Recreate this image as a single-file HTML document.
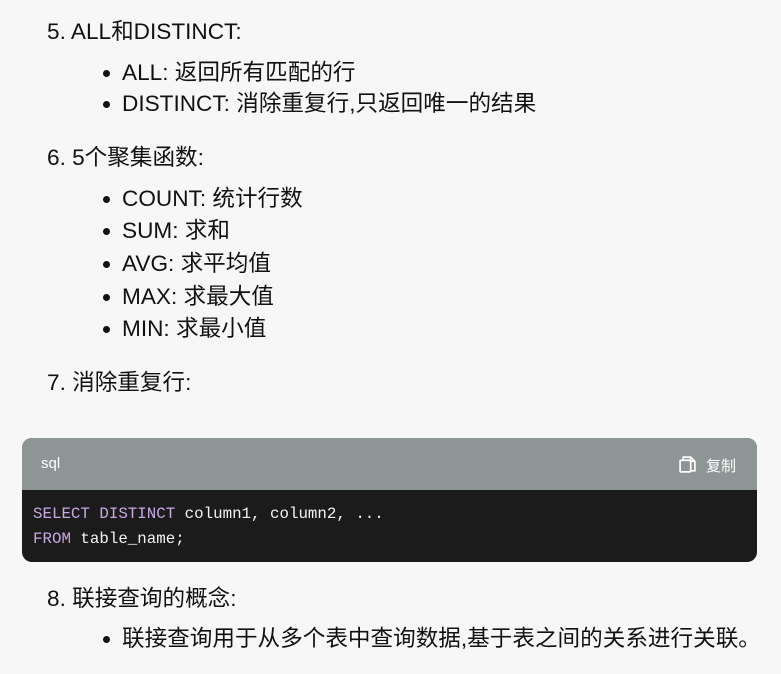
<!DOCTYPE html>
<html><head><meta charset="utf-8"><style>
body{margin:0;width:781px;height:674px;background:#f7f7f7;font-family:"Liberation Sans","Noto Sans CJK SC",sans-serif;color:#111;position:relative;overflow:hidden}
.t{position:absolute;font-size:22.6px;line-height:26px;white-space:nowrap;letter-spacing:0}
.n{left:47px}
.b{left:122px}
.b:before{content:"";position:absolute;left:-19px;top:10px;width:7px;height:7px;border-radius:50%;background:#111}
.code{position:absolute;left:22px;top:438px;width:735px;height:124px;border-radius:10px;overflow:hidden;background:#1b1b1b}
.hd{height:52px;background:#8d9595;color:#fff;font-size:15px;position:relative}
.mono{position:absolute;left:11px;font-family:"Liberation Mono",monospace;font-size:15.8px;color:#f3f3f3;white-space:pre}
.k{color:#c9a8e4}
</style></head><body>
<div class="t n" style="top:19px">5. ALL和DISTINCT:</div>
<div class="t b" style="top:60px">ALL: 返回所有匹配的行</div>
<div class="t b" style="top:91px">DISTINCT: 消除重复行,只返回唯一的结果</div>
<div class="t n" style="top:145px">6. 5个聚集函数:</div>
<div class="t b" style="top:186px">COUNT: 统计行数</div>
<div class="t b" style="top:218px">SUM: 求和</div>
<div class="t b" style="top:251px">AVG: 求平均值</div>
<div class="t b" style="top:284px">MAX: 求最大值</div>
<div class="t b" style="top:316px">MIN: 求最小值</div>
<div class="t n" style="top:370px">7. 消除重复行:</div>
<div class="code">
<div class="hd"><span style="position:absolute;left:19px;top:17px">sql</span>
<svg style="position:absolute;left:656px;top:17px" width="19" height="19" viewBox="0 0 18 18" fill="none" stroke="#fff" stroke-width="1.6"><path d="M5 4V2h7l4 4v9h-4"/><rect x="2" y="5" width="10" height="11" rx="1"/><path d="M12 2v4h4"/></svg>
<span style="position:absolute;left:684px;top:17px">复制</span></div>
<div class="mono" style="top:67px"><span class="k">SELECT DISTINCT</span> column1, column2, ...</div>
<div class="mono" style="top:92px"><span class="k">FROM</span> table_name;</div>
</div>
<div class="t n" style="top:586px">8. 联接查询的概念:</div>
<div class="t b" style="top:626px">联接查询用于从多个表中查询数据,基于表之间的关系进行关联。</div>
</body></html>
